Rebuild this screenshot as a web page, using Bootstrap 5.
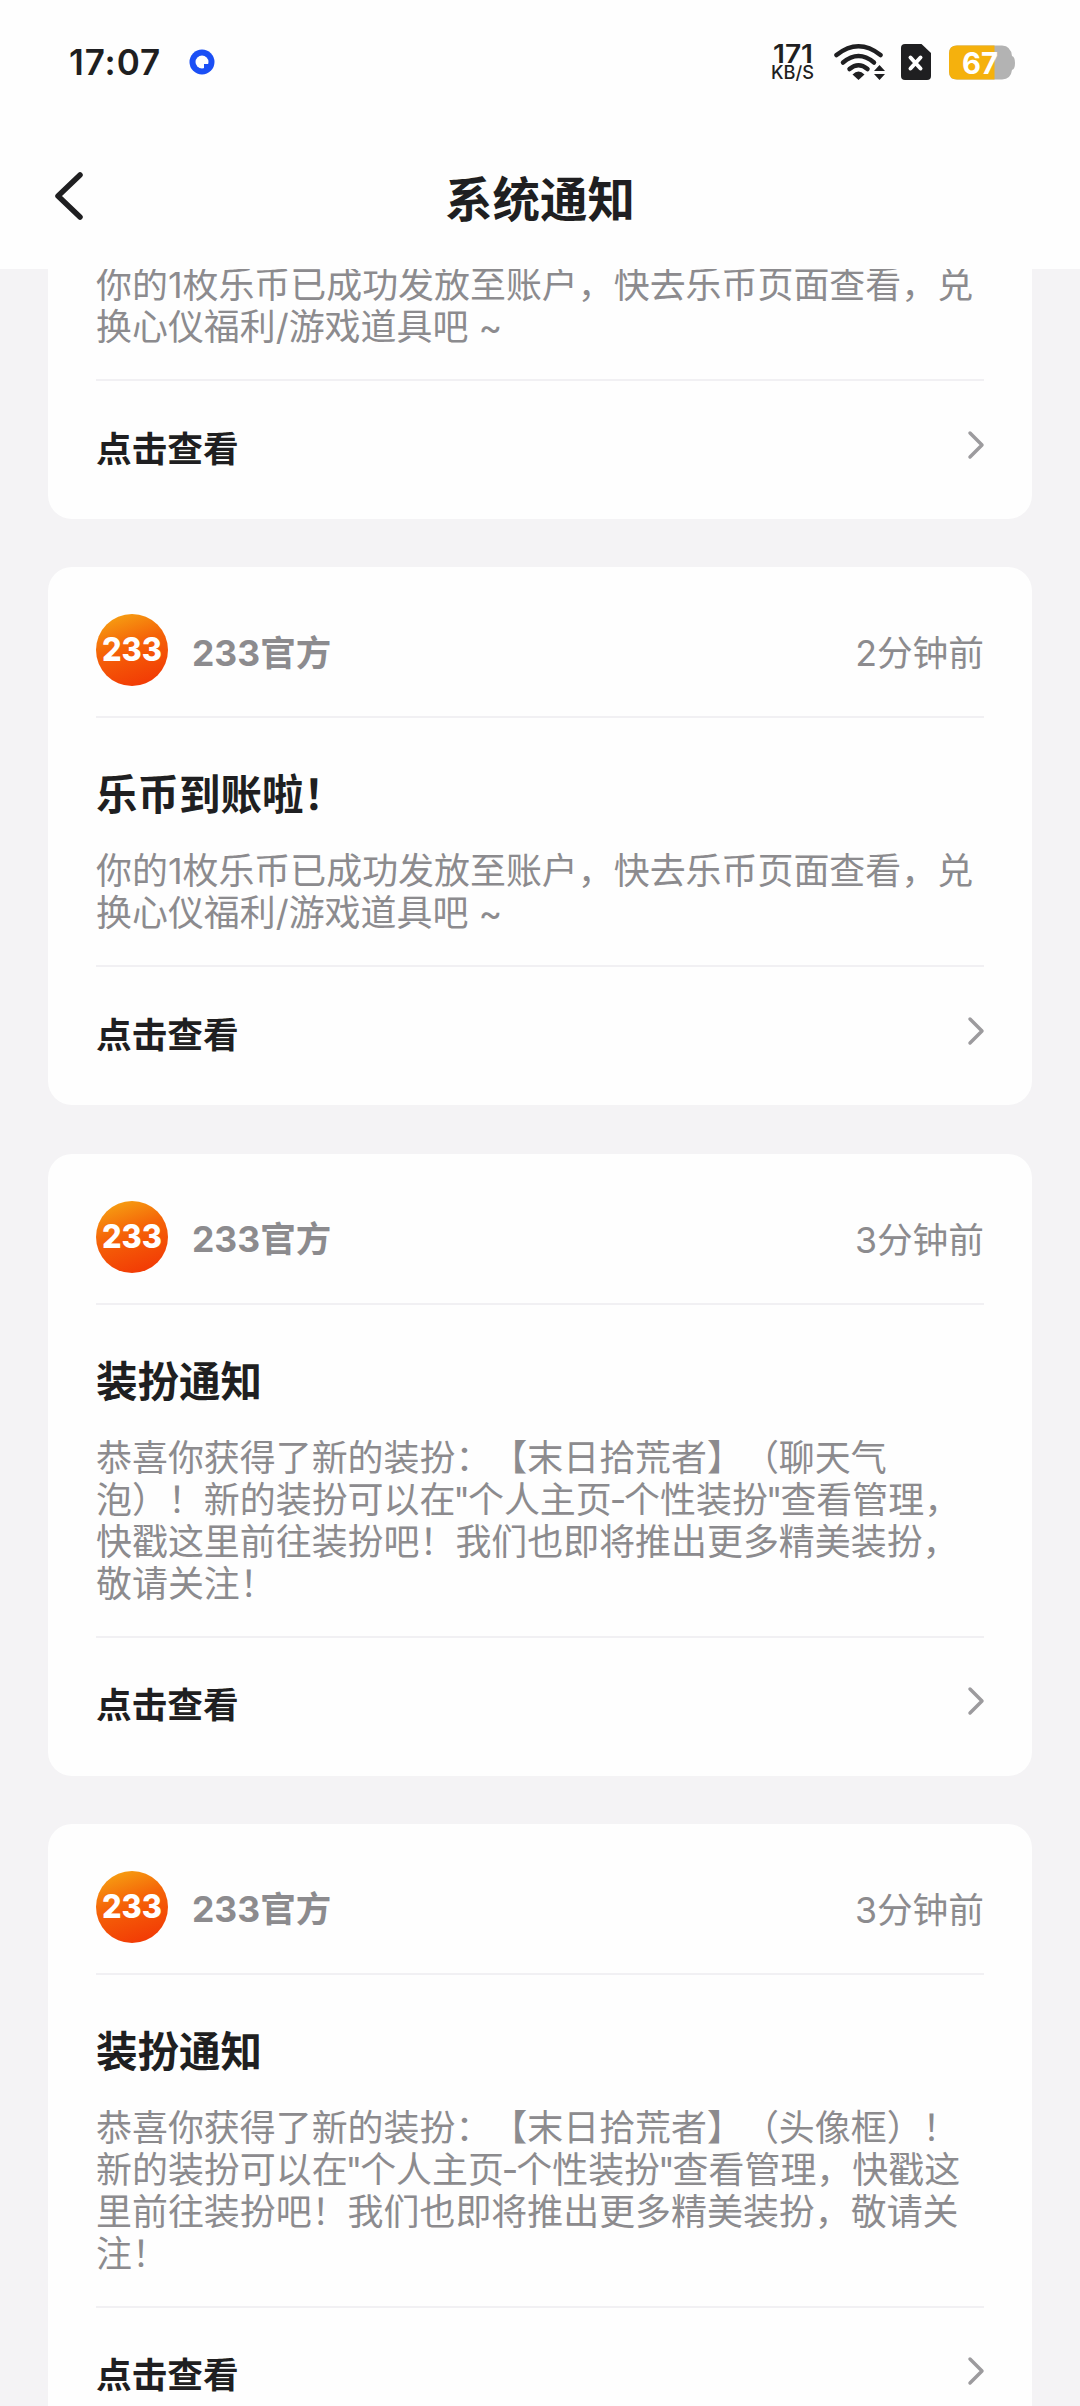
<!DOCTYPE html>
<html lang="zh-CN">
<head>
<meta charset="utf-8">
<meta name="viewport" content="width=device-width, initial-scale=1">
<title>系统通知</title>
<link href="https://cdn.jsdelivr.net/npm/bootstrap@5.3.0/dist/css/bootstrap.min.css" rel="stylesheet">
<style>
  html, body { height: 2406px; overflow: hidden; }
  body { background: #f4f3f5; color: #1f1f21; font-family: Inter, "Noto Sans CJK SC", sans-serif; text-spacing-trim: space-all; }
  svg { display: block; flex: none; }
  .top-area { height: 269px; background: #fefefe; position: relative; z-index: 2; }
  .status-row { height: 124px; padding: 0 64px 0 69px; }
  .clock { font-size: 35px; font-weight: 600; line-height: 1; letter-spacing: .9px; }
  .live-dot { margin-left: 28px; }
  .title-row { height: 144px; padding: 0 54px; }
  .page-title { font-size: 47.5px; font-weight: 700; line-height: 60px; margin: 0; padding-top: 8px; }
  .feed { padding: 0 48px; gap: 48.3px; margin-top: -288px; }
  .notice { border: 0; border-radius: 24px; background: #fefefe; padding: 0 48px; flex: none; }
  .notice-head { height: 151px; padding-top: 17px; border-bottom: 2px solid #f1f0f3; }
  .sender { font-size: 35.5px; font-weight: 700; color: #8c8b8e; margin-left: 24px; line-height: 54px; padding-top: 7px; }
  .when { font-size: 35.7px; color: #8c8b8e; line-height: 54px; padding-top: 6px; }
  .notice-title { font-size: 41.5px; font-weight: 700; line-height: 60px; margin: 47px 0 25px; }
  .notice-text { font-size: 35.95px; line-height: 42px; color: #8c8b8e; white-space: nowrap; margin: 0; }
  .tight { margin: 0 -2.1px; }
  .notice-foot { height: 140px; padding-bottom: 3px; border-top: 2px solid #f1f0f3; margin-top: 31px; }
  .go { font-size: 35.7px; font-weight: 700; line-height: 54px; color: inherit; text-decoration: none; }
  .chev { margin: 0 -1px 8px 0; }
</style>
<script src="https://cdn.jsdelivr.net/npm/bootstrap@5.3.0/dist/js/bootstrap.bundle.min.js"></script>
</head>
<body>
<svg width="0" height="0" class="position-absolute" aria-hidden="true">
  <defs>
    <linearGradient id="flame" x1=".2" y1="0" x2=".55" y2="1">
      <stop offset="0" stop-color="#f6a313"/><stop offset=".45" stop-color="#f56408"/><stop offset="1" stop-color="#f23c05"/>
    </linearGradient>
    <symbol id="avatar" viewBox="0 0 72 72">
      <circle cx="36" cy="36" r="36" fill="url(#flame)"/>
      <text x="6" y="47" textLength="60" lengthAdjust="spacingAndGlyphs" font-family="Inter, sans-serif" font-weight="800" font-size="32" fill="#fff">233</text>
    </symbol>
    <symbol id="chevron" viewBox="0 0 18 30">
      <path d="M3 3L15 15L3 27" fill="none" stroke="#9c9b9e" stroke-width="3.5" stroke-linecap="round" stroke-linejoin="round"/>
    </symbol>
  </defs>
</svg>

<header class="top-area">
  <div class="status-row d-flex align-items-center justify-content-between">
    <div class="d-flex align-items-center">
      <span class="clock">17:07</span>
      <svg class="live-dot" width="26" height="26" viewBox="0 0 26 26"><circle cx="13" cy="13" r="12.5" fill="#1b4ff5"/><circle cx="13" cy="13" r="6.500" fill="#fff"/><path d="M15 20V15H20V20z" fill="#1b4ff5"/></svg>
    </div>
    <svg width="246" height="40" viewBox="-2 0 246 40">
      <g font-family="Inter, sans-serif" fill="#1f1f21">
        <text x="1" y="21" font-size="26" font-weight="600" textLength="40" lengthAdjust="spacingAndGlyphs">171</text>
        <text x="-1" y="37" font-size="18" font-weight="500" textLength="43" lengthAdjust="spacingAndGlyphs">KB/S</text>
      </g>
      <g fill="none" stroke="#1f1f21" stroke-width="4.5" stroke-linecap="round">
        <path d="M64.500 13Q86.500-4.500 108.500 13"/><path d="M71 20.500Q86.500 7.500 102 20.500"/><path d="M77.500 27Q86.500 19.500 95.500 27"/>
      </g>
      <path d="M80.500 32.500Q86.500 26.500 92.500 32.500L86.500 38z" fill="#1f1f21"/>
      <path d="M102 29L107.500 23L113 29zM102 32L107.500 38L113 32z" fill="#1f1f21"/>
      <path d="M133 2H149.500L159 11V34Q159 38 155 38H133Q129 38 129 34V6Q129 2 133 2z" fill="#1f1f21"/>
      <path d="M138.500 15.500L148.500 26.500M148.500 15.500L138.500 26.500" stroke="#fff" stroke-width="4" stroke-linecap="round"/>
      <path d="M185 3.500H230Q239 4 240 14Q243 15 243 21Q243 27 240 28Q239 37 230 37.500H185Q177 37.500 177 29.500V11.500Q177 3.500 185 3.500z" fill="#b3b3b3"/>
      <path d="M185 3.500H222.500V37.500H185Q177 37.500 177 29.500V11.500Q177 3.500 185 3.500z" fill="#f5b10d"/>
      <text x="190" y="31.500" font-family="Inter, sans-serif" font-size="29.5" font-weight="700" fill="#fff" textLength="36" lengthAdjust="spacingAndGlyphs">67</text>
    </svg>
  </div>
  <div class="title-row d-flex align-items-center">
    <svg width="30" height="48" viewBox="0 0 30 48"><path d="M26 3L4 24L26 45" fill="none" stroke="#1f1f21" stroke-width="5.5" stroke-linecap="round" stroke-linejoin="round"/></svg>
    <h1 class="page-title flex-grow-1 text-center">系统通知</h1>
    <span style="width:30px"></span>
  </div>
</header>

<main class="feed d-flex flex-column">
  <article class="card notice">
    <div class="notice-head d-flex align-items-center"><svg width="72" height="72"><use href="#avatar"/></svg><span class="sender">233官方</span><span class="when ms-auto">2分钟前</span></div>
    <h2 class="notice-title">乐币到账啦！</h2>
    <p class="notice-text">你的1枚乐币已成功发放至账户，快去乐币页面查看，兑<br>换心仪福利/游戏道具吧 ~</p>
    <div class="notice-foot d-flex align-items-center justify-content-between"><a class="go" href="#">点击查看</a><svg class="chev" width="18" height="30"><use href="#chevron"/></svg></div>
  </article>
  <article class="card notice">
    <div class="notice-head d-flex align-items-center"><svg width="72" height="72"><use href="#avatar"/></svg><span class="sender">233官方</span><span class="when ms-auto">2分钟前</span></div>
    <h2 class="notice-title">乐币到账啦！</h2>
    <p class="notice-text">你的1枚乐币已成功发放至账户，快去乐币页面查看，兑<br>换心仪福利/游戏道具吧 ~</p>
    <div class="notice-foot d-flex align-items-center justify-content-between"><a class="go" href="#">点击查看</a><svg class="chev" width="18" height="30"><use href="#chevron"/></svg></div>
  </article>
  <article class="card notice">
    <div class="notice-head d-flex align-items-center"><svg width="72" height="72"><use href="#avatar"/></svg><span class="sender">233官方</span><span class="when ms-auto">3分钟前</span></div>
    <h2 class="notice-title">装扮通知</h2>
    <p class="notice-text">恭喜你获得了新的装扮：【末日拾荒者】（聊天气<br>泡）！新的装扮可以在<span class="tight">"</span>个人主页<span class="tight">-</span>个性装扮<span class="tight">"</span>查看管理，<br>快戳这里前往装扮吧！我们也即将推出更多精美装扮，<br>敬请关注！</p>
    <div class="notice-foot d-flex align-items-center justify-content-between"><a class="go" href="#">点击查看</a><svg class="chev" width="18" height="30"><use href="#chevron"/></svg></div>
  </article>
  <article class="card notice">
    <div class="notice-head d-flex align-items-center"><svg width="72" height="72"><use href="#avatar"/></svg><span class="sender">233官方</span><span class="when ms-auto">3分钟前</span></div>
    <h2 class="notice-title">装扮通知</h2>
    <p class="notice-text">恭喜你获得了新的装扮：【末日拾荒者】（头像框）！<br>新的装扮可以在<span class="tight">"</span>个人主页<span class="tight">-</span>个性装扮<span class="tight">"</span>查看管理，快戳这<br>里前往装扮吧！我们也即将推出更多精美装扮，敬请关<br>注！</p>
    <div class="notice-foot d-flex align-items-center justify-content-between"><a class="go" href="#">点击查看</a><svg class="chev" width="18" height="30"><use href="#chevron"/></svg></div>
  </article>
</main>
</body>
</html>
